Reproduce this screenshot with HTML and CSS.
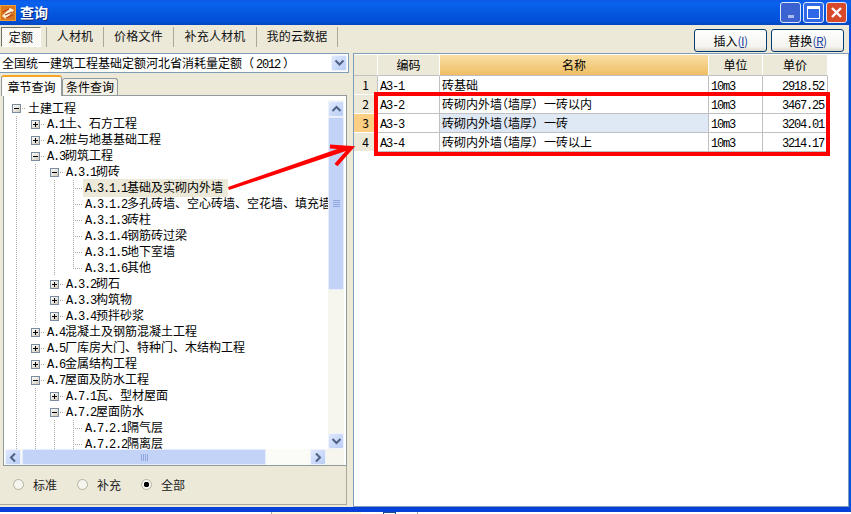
FILE: index.html
```html
<!DOCTYPE html>
<html lang="zh-CN">
<head>
<meta charset="utf-8">
<title>查询</title>
<link rel="stylesheet" href="styles.css">
</head>
<body>
<div class="window">
  <header class="titlebar">
    <svg class="app-icon" width="16" height="16" viewBox="0 0 16 16"><rect width="16" height="16" fill="#f0a030"/><rect x="1" y="1" width="14" height="14" fill="#d9761f"/><path d="M2 11 L10 3 L14 5 L6 14 Z" fill="#fdf1d6"/><path d="M3 7 L9 4 M5 10 L12 7 M6 13 L13 10" stroke="#b8431a" stroke-width="1.2"/></svg>
    <span class="title">查询</span>
    <span class="spacer"></span>
    <span class="winbtn min"><i></i></span>
    <span class="winbtn max"><i></i></span>
    <span class="winbtn close"><svg width="13" height="13" viewBox="0 0 13 13"><path d="M2 2 L11 11 M11 2 L2 11" stroke="#fff" stroke-width="2.4"/></svg></span>
  </header>
  <div class="toolbar">
    <nav class="toptabs">
      <span class="toptab on">定额</span>
      <span class="toptab w1">人材机</span>
      <span class="toptab w2">价格文件</span>
      <span class="toptab w3">补充人材机</span>
      <span class="toptab w4">我的云数据</span>
    </nav>
    <span class="spacer"></span>
    <button class="btn">插入<span class="acc">(<u>I</u>)</span></button>
    <button class="btn">替换<span class="acc">(<u>R</u>)</span></button>
  </div>
  <main class="body">
    <section class="left">
      <div class="combo">
        <span class="combo-text">全国统一建筑工程基础定额河北省消耗量定额（<span class="l yr">2012</span>）</span>
        <span class="sb-btn combo-btn"><svg width="11" height="8" viewBox="0 0 11 8"><path d="M1.5 1.5 L5.5 5.5 L9.5 1.5" fill="none" stroke="#4d6185" stroke-width="2"/></svg></span>
      </div>
      <div class="subtabs">
        <span class="subtab on">章节查询</span>
        <span class="subtab">条件查询</span>
      </div>
      <div class="pane">
        <div class="tree-wrap">
          <div class="tree">
            <div class="row"><span class="ico minus"></span><span class="hd"></span><span class="t">土建工程</span></div>
            <div class="row"><span class="g"></span><span class="ico plus"></span><span class="hd"></span><span class="t"><span class="l">A.1</span>土、石方工程</span></div>
            <div class="row"><span class="g"></span><span class="ico plus"></span><span class="hd"></span><span class="t"><span class="l">A.2</span>桩与地基基础工程</span></div>
            <div class="row"><span class="g"></span><span class="ico minus"></span><span class="hd"></span><span class="t"><span class="l">A.3</span>砌筑工程</span></div>
            <div class="row"><span class="g"></span><span class="g"></span><span class="ico minus"></span><span class="hd"></span><span class="t"><span class="l">A.3.1</span>砌砖</span></div>
            <div class="row"><span class="g"></span><span class="g"></span><span class="g"></span><span class="leaf"></span><span class="t sel"><span class="l">A.3.1.1</span>基础及实砌内外墙</span></div>
            <div class="row"><span class="g"></span><span class="g"></span><span class="g"></span><span class="leaf"></span><span class="t"><span class="l">A.3.1.2</span>多孔砖墙、空心砖墙、空花墙、填充墙</span></div>
            <div class="row"><span class="g"></span><span class="g"></span><span class="g"></span><span class="leaf"></span><span class="t"><span class="l">A.3.1.3</span>砖柱</span></div>
            <div class="row"><span class="g"></span><span class="g"></span><span class="g"></span><span class="leaf"></span><span class="t"><span class="l">A.3.1.4</span>钢筋砖过梁</span></div>
            <div class="row"><span class="g"></span><span class="g"></span><span class="g"></span><span class="leaf"></span><span class="t"><span class="l">A.3.1.5</span>地下室墙</span></div>
            <div class="row"><span class="g"></span><span class="g"></span><span class="g"></span><span class="leaf last"></span><span class="t"><span class="l">A.3.1.6</span>其他</span></div>
            <div class="row"><span class="g"></span><span class="g"></span><span class="ico plus"></span><span class="hd"></span><span class="t"><span class="l">A.3.2</span>砌石</span></div>
            <div class="row"><span class="g"></span><span class="g"></span><span class="ico plus"></span><span class="hd"></span><span class="t"><span class="l">A.3.3</span>构筑物</span></div>
            <div class="row"><span class="g"></span><span class="g"></span><span class="ico plus"></span><span class="hd"></span><span class="t"><span class="l">A.3.4</span>预拌砂浆</span></div>
            <div class="row"><span class="g"></span><span class="ico plus"></span><span class="hd"></span><span class="t"><span class="l">A.4</span>混凝土及钢筋混凝土工程</span></div>
            <div class="row"><span class="g"></span><span class="ico plus"></span><span class="hd"></span><span class="t"><span class="l">A.5</span>厂库房大门、特种门、木结构工程</span></div>
            <div class="row"><span class="g"></span><span class="ico plus"></span><span class="hd"></span><span class="t"><span class="l">A.6</span>金属结构工程</span></div>
            <div class="row"><span class="g"></span><span class="ico minus"></span><span class="hd"></span><span class="t"><span class="l">A.7</span>屋面及防水工程</span></div>
            <div class="row"><span class="g"></span><span class="g"></span><span class="ico plus"></span><span class="hd"></span><span class="t"><span class="l">A.7.1</span>瓦、型材屋面</span></div>
            <div class="row"><span class="g"></span><span class="g"></span><span class="ico minus"></span><span class="hd"></span><span class="t"><span class="l">A.7.2</span>屋面防水</span></div>
            <div class="row"><span class="g"></span><span class="g"></span><span class="g"></span><span class="leaf"></span><span class="t"><span class="l">A.7.2.1</span>隔气层</span></div>
            <div class="row"><span class="g"></span><span class="g"></span><span class="g"></span><span class="leaf"></span><span class="t"><span class="l">A.7.2.2</span>隔离层</span></div>
          </div>
          <div class="vbar">
            <span class="sb-btn"><svg width="11" height="8" viewBox="0 0 11 8"><path d="M1.5 6 L5.5 2 L9.5 6" fill="none" stroke="#4d6185" stroke-width="2"/></svg></span>
            <span class="vthumb"><span class="grip-v"></span></span>
            <span class="vtrack"></span>
            <span class="sb-btn"><svg width="11" height="8" viewBox="0 0 11 8"><path d="M1.5 2 L5.5 6 L9.5 2" fill="none" stroke="#4d6185" stroke-width="2"/></svg></span>
          </div>
        </div>
        <div class="hbar">
          <span class="sb-btn"><svg width="8" height="11" viewBox="0 0 8 11"><path d="M6 1.5 L2 5.5 L6 9.5" fill="none" stroke="#4d6185" stroke-width="2"/></svg></span>
          <span class="hthumb"><span class="grip-h"></span></span>
          <span class="htrack"></span>
          <span class="sb-btn"><svg width="8" height="11" viewBox="0 0 8 11"><path d="M2 1.5 L6 5.5 L2 9.5" fill="none" stroke="#4d6185" stroke-width="2"/></svg></span>
        </div>
      </div>
      <div class="radios">
        <label class="radio"><i></i>标准</label>
        <label class="radio"><i></i>补充</label>
        <label class="radio on"><i></i>全部</label>
      </div>
    </section>
    <section class="right">
      <div class="grid">
        <div class="cell hcell"></div><div class="cell hcell">编码</div><div class="cell hcell active">名称</div><div class="cell hcell">单位</div><div class="cell hcell">单价</div>
        <div class="cell num">1</div><div class="cell"><span class="l">A3-1</span></div><div class="cell">砖基础</div><div class="cell"><span class="l">10m3</span></div><div class="cell price"><span class="l">2918.52</span></div>
        <div class="cell num">2</div><div class="cell"><span class="l">A3-2</span></div><div class="cell">砖砌内外墙<span class="ph">（</span>墙厚）一砖以内</div><div class="cell"><span class="l">10m3</span></div><div class="cell price"><span class="l">3467.25</span></div>
        <div class="cell num cur">3</div><div class="cell"><span class="l">A3-3</span></div><div class="cell hi">砖砌内外墙<span class="ph">（</span>墙厚）一砖</div><div class="cell"><span class="l">10m3</span></div><div class="cell price"><span class="l">3204.01</span></div>
        <div class="cell num">4</div><div class="cell"><span class="l">A3-4</span></div><div class="cell">砖砌内外墙<span class="ph">（</span>墙厚）一砖以上</div><div class="cell"><span class="l">10m3</span></div><div class="cell price"><span class="l">3214.17</span></div>
      </div>
    </section>
  </main>
  <div class="redbox"></div>
  <svg class="arrow" width="851" height="512" viewBox="0 0 851 512"><path d="M228 187 L346 146 L349 150 L229 190 Z" fill="#f00"/><path d="M330 146.5 L351 148 L336 165" fill="none" stroke="#f00" stroke-width="4"/></svg>
</div>
<div class="strip"><span class="frag a"></span><span class="frag b"></span><span class="frag c"></span></div>
</body>
</html>
```
FILE: styles.css
```css
* { box-sizing: border-box; }
html, body { margin: 0; padding: 0; }
body {
  width: 851px;
  height: 514px;
  overflow: hidden;
  background: #fff;
  font-family: "Noto Sans CJK SC", "Liberation Sans", sans-serif;
  font-size: 12px;
  color: #000;
}
.window {
  position: relative;
  width: 851px;
  height: 512px;
  display: flex;
  flex-direction: column;
  background: #ece9d8;
  border-right: 2px solid #0a4fe0;
  border-bottom: 5px solid #0740d8;
}
.spacer { flex: 1; }
.l {
  font-family: "Liberation Mono", monospace;
  font-size: 12px;
  letter-spacing: -1.2px;
}
.yr { margin: 0 3px 0 2px; }
.ph { font-feature-settings: "halt"; }
.titlebar {
  height: 25px;
  margin-right: -2px;
  flex: none;
  display: flex;
  align-items: center;
  padding: 0 4px 0 0;
  background: linear-gradient(#0a5ae6 0, #0a62ee 12%, #0457e0 50%, #0350d6 85%, #0346c0 100%);
}
.app-icon { margin-right: 4px; }
.title {
  color: #fff;
  font-size: 14px;
  line-height: 22px;
  margin-top: -2px;
  font-weight: 700;
  text-shadow: 1px 1px 0 #0a2a80;
}
.winbtn {
  width: 21px;
  height: 21px;
  margin-left: 2px;
  border: 1px solid #dfe8fb;
  border-radius: 3px;
  display: flex;
  align-items: center;
  justify-content: center;
  background: #2f69e8;
}
.winbtn.min { background: #3a62d0; }
.winbtn.min i { width: 6px; height: 3px; background: #a9bdf0; margin-top: 8px; }
.winbtn.max i { width: 13px; height: 13px; border: 1px solid #fff; border-top-width: 3px; }
.winbtn.close { background: #d8492a; }
.toolbar {
  height: 27px;
  flex: none;
  display: flex;
  align-items: flex-start;
  padding-right: 5px;
}
.toptabs { display: flex; padding: 2px 0 0 1px; }
.toptab {
  height: 20px;
  line-height: 18px;
  font-size: 12px;
  text-align: center;
  border-right: 1px solid #aca899;
  color: #111;
  letter-spacing: .2px;
}
.toptab.on {
  width: 40px;
  margin-right: 5px;
  border: 1px solid;
  border-color: #716f64 #fff #fff #716f64;
  background: repeating-conic-gradient(#f5f3ea 0 25%, #fff 0 50%) 0 0 / 2px 2px;
}
.w1 { width: 58px; border-left: 1px solid #aca899; }
.w2 { width: 70px; }
.w3 { width: 83px; }
.w4 { width: 81px; }
.btn {
  width: 73px;
  height: 23px;
  margin: 4px 0 0 4px;
  padding: 0;
  font: 12px "Noto Sans CJK SC", sans-serif;
  border: 1px solid #003c74;
  border-radius: 3px;
  background: linear-gradient(#fff, #f4f3ee 80%, #dcd8ca);
  color: #000;
}
.acc { color: #1a3f9c; letter-spacing: -.5px; }
.body { flex: 1; display: flex; min-height: 0; }
.left {
  width: 347px;
  flex: none;
  display: flex;
  flex-direction: column;
}
.combo {
  height: 20px;
  flex: none;
  margin: 1px -2px 0 0;
  display: flex;
  align-items: center;
  background: #fff;
  border: 1px solid #7f9db9;
  border-left: 0;
  padding-right: 1px;
  position: relative;
}
.combo-text { flex: 1; white-space: nowrap; padding-left: 2px; }
.sb-btn {
  width: 16px;
  height: 16px;
  flex: none;
  display: flex;
  align-items: center;
  justify-content: center;
  background: linear-gradient(135deg, #dfe8fd, #b9cdf5);
  border: 1px solid #eef3fe;
  border-radius: 2px;
}
.combo-btn { height: 16px; }
.subtabs {
  flex: none;
  display: flex;
  align-items: flex-end;
  height: 22px;
  padding-left: 1px;
}
.subtab {
  height: 17px;
  line-height: 16px;
  width: 56px;
  text-align: center;
  background: #f3f1e6;
  border: 1px solid #919b9c;
  border-bottom: 0;
  border-radius: 3px 3px 0 0;
}
.subtab.on {
  width: 61px;
  height: 21px;
  line-height: 19px;
  background: #fcfcfa;
  border-top: 2px solid #f5a623;
  margin-bottom: -1px;
  position: relative;
  z-index: 1;
}
.pane {
  height: 371px;
  flex: none;
  margin-left: 3px;
  border: 1px solid #919b9c;
  background: #fff;
  padding: 4px 2px 0 1px;
  display: flex;
  flex-direction: column;
}
.tree-wrap { flex: 1; display: flex; min-height: 0; }
.tree { flex: 1; overflow: hidden; padding-left: 5px; min-width: 0; }
.row { height: 16px; display: flex; align-items: center; white-space: nowrap; }
.g {
  width: 19px;
  height: 100%;
  flex: none;
  background: repeating-linear-gradient(#aaa 0 1px, transparent 1px 2px) 6px 0 / 1px 100% no-repeat;
}
.ico {
  width: 9px;
  height: 9px;
  flex: none;
  margin-left: 2px;
  margin-right: 1px;
  border: 1px solid #7b8ba0;
  background: linear-gradient(135deg, #fff, #cfcabb);
  position: relative;
}
.ico::before { content: ""; position: absolute; left: 1px; top: 3px; width: 5px; height: 1px; background: #000; }
.plus::after { content: ""; position: absolute; left: 3px; top: 1px; width: 1px; height: 5px; background: #000; }
.hd {
  width: 4px;
  height: 1px;
  flex: none;
  background: repeating-linear-gradient(90deg, #aaa 0 1px, transparent 1px 2px);
}
.leaf {
  width: 10px;
  height: 100%;
  flex: none;
  margin-left: 6px;
  background:
    repeating-linear-gradient(#aaa 0 1px, transparent 1px 2px) 0 0 / 1px 100% no-repeat,
    repeating-linear-gradient(90deg, #aaa 0 1px, transparent 1px 2px) 0 8px / 100% 1px no-repeat;
}
.leaf.last { background:
    repeating-linear-gradient(#aaa 0 1px, transparent 1px 2px) 0 0 / 1px 50% no-repeat,
    repeating-linear-gradient(90deg, #aaa 0 1px, transparent 1px 2px) 0 8px / 100% 1px no-repeat; }
.t { padding-left: 2px; line-height: 16px; }
.sel { background: #ece9d8; padding-right: 5px; }
.vbar { width: 16px; flex: none; display: flex; flex-direction: column; background: #f6f5ee; padding-top: 1px; }
.vthumb {
  height: 173px;
  flex: none;
  display: flex;
  align-items: center;
  justify-content: center;
  background: #c3d3f8;
  border: 1px solid #e6edfd;
  border-radius: 2px;
}
.vtrack { flex: 1; background: #f6f5ee; }
.grip-v {
  width: 7px;
  height: 7px;
  background: repeating-linear-gradient(#8fa7dc 0 1px, transparent 1px 2px);
}
.hbar { height: 16px; flex: none; display: flex; background: #f6f5ee; padding-right: 18px; }
.hthumb {
  width: 244px;
  flex: none;
  margin-left: 1px;
  display: flex;
  align-items: center;
  justify-content: center;
  background: #c3d3f8;
  border: 1px solid #e6edfd;
  border-radius: 2px;
}
.htrack { flex: 1; background: #fbfbf8; }
.grip-h {
  width: 7px;
  height: 7px;
  background: repeating-linear-gradient(90deg, #8fa7dc 0 1px, transparent 1px 2px);
}
.radios {
  height: 39px;
  flex: none;
  display: flex;
  align-items: center;
  padding: 0 0 2px 13px;
  color: #222;
  border-right: 1px solid #aca899;
  border-bottom: 1px solid #aca899;
}
.radio { display: flex; align-items: center; width: 64px; }
.radio i {
  width: 11px;
  height: 11px;
  margin-right: 9px;
  border: 1px solid #b5b2a4;
  border-radius: 50%;
  background: #f6f5ee;
}
.radio.on i { background: radial-gradient(circle, #000 0 2.5px, #f6f5ee 3px); }
.right {
  flex: 1;
  margin: 1px 0 0 6px;
  background: #fff;
  border: 1px solid #7f9db9;
  padding-top: 1px;
  min-width: 0;
}
.grid {
  display: grid;
  grid-template-columns: 24px 62px 269px 54px 65px;
  grid-template-rows: 21px repeat(4, 19px);
  width: 474px;
}
.cell {
  border-right: 1px solid #c0c0c0;
  border-bottom: 1px solid #c0c0c0;
  padding-left: 2px;
  line-height: 18px;
  white-space: nowrap;
  overflow: hidden;
}
.hcell {
  background: #ece9d8;
  text-align: center;
  line-height: 20px;
  padding: 0;
  border-right: 1px solid #fff;
}
.hcell.active { background: linear-gradient(#f9dfa5, #f0be63); }
.num { background: #ece9d8; text-align: center; padding: 0; border-bottom-color: #fff; }
.num.cur { background: #fdcf85; }
.hi { background: #dfe8f5; }
.price { text-align: right; padding: 0 3px 0 0; }
.redbox {
  position: absolute;
  left: 374px;
  top: 92px;
  width: 456px;
  height: 64px;
  border: 4px solid #f00;
}
.arrow { position: absolute; left: 0; top: 0; pointer-events: none; }
.strip { height: 2px; display: flex; padding-left: 271px; background: #fff; }
.frag { display: block; height: 2px; }
.frag.a { width: 90px; background: #fdf8e0; border-left: 1px solid #aca899; }
.frag.b { width: 13px; margin-left: 22px; background: #fff; border: solid #1d4f86; border-width: 1px 1px 0; }
.frag.c { width: 1px; margin-left: 21px; background: #aca899; }
```
